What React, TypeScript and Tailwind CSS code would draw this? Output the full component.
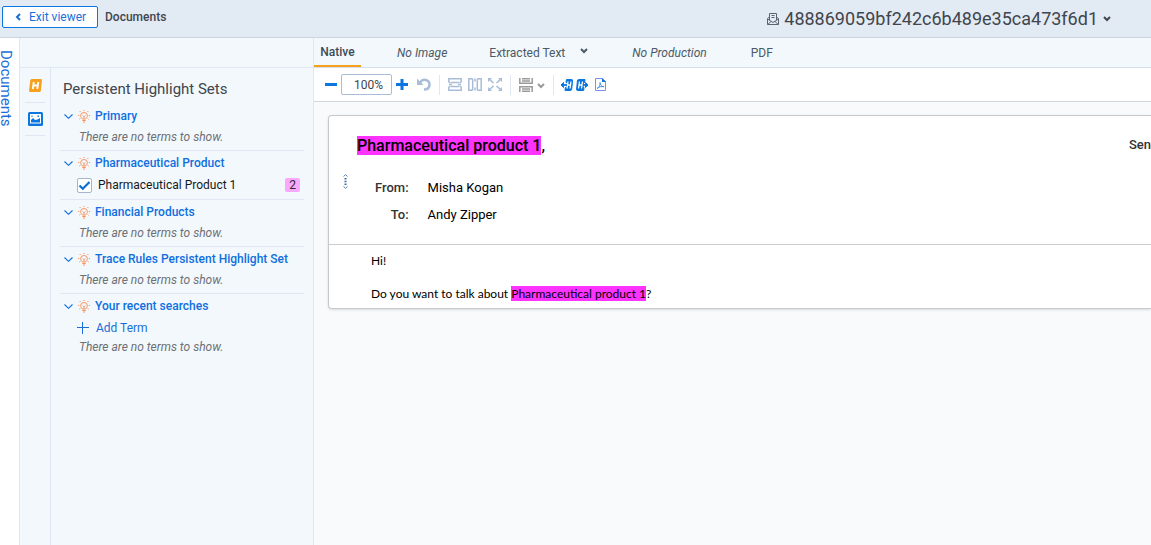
import { useState } from 'react';

const Chevron = ({ className }: { className?: string }) => (
  <svg width="9" height="5" viewBox="0 0 9 5" className={className} fill="none" stroke="currentColor" strokeWidth="1.1">
    <path d="M.5 .5 4.5 4.3 8.5 .5" />
  </svg>
);

const Caret = ({ className }: { className?: string }) => (
  <svg width="8" height="6" viewBox="0 0 8 6" className={className} fill="none" stroke="currentColor" strokeWidth="2">
    <path d="M1 1 4 4 7 1" />
  </svg>
);

const Bulb = () => (
  <svg width="12" height="13" viewBox="0 0 12 13" fill="none" stroke="#f8955f" strokeWidth="1">
    <path d="M6 2.500a3.300 3.300 0 0 0-3.400 3.300c0 1.400 1.200 2.200 1.700 3.200h3.400c.5-1 1.700-1.800 1.700-3.200A3.300 3.300 0 0 0 6 2.500Z" />
    <path d="M4.300 10.500h3.400M5 12h2M6 9V6.800M4.700 5.500 6 6.800l1.300-1.300M6 0v1M1.600 1l1 1M10.400 1l-1 1M0 5.500h1.200M10.800 5.500H12M1.400 9.200l.9-.7M10.600 9.200l-.9-.7" />
  </svg>
);

const Plus = () => (
  <svg width="12" height="12" viewBox="0 0 12 12" stroke="currentColor" strokeWidth="1">
    <path d="M0 5.500h12M5.500 0v12" />
  </svg>
);

const MailIcon = () => (
  <svg width="12" height="14" viewBox="0 0 12 14" fill="none" stroke="#5c6470" strokeWidth="1">
    <path d="M2.500 8V1.500h7V8M4.500 3.500h3M4.500 5.500h3M2.500 5 .5 6.500v6h11v-6L9.500 5M.5 7 6 10.500 11.500 7M.7 12.500 4 9.500M11.300 12.500 8 9.500" />
  </svg>
);

const PreviousHit = () => (
  <svg width="13" height="12" viewBox="0 0 13 12" fill="none" stroke="#0b76e0">
    <path d="M6.500 .5h5q1.300 0 1.100 1.300L11.700 10q-.2 1.500-1.500 1.500H5L5.300 8.500H7L7.500 3.500H6z" fill="#0b76e0" />
    <path d="M8 2.500 7 9.500M11 2.500 10 9.500M7.500 6h3" stroke="#fff" strokeWidth="1.300" />
    <path d="M7 6H2" strokeWidth="1.800" />
    <path d="M3.500 3.500 1 6l2.500 2.500z" fill="#0b76e0" />
  </svg>
);

const NextHit = () => (
  <svg width="13" height="12" viewBox="0 0 13 12" fill="none" stroke="#0b76e0">
    <path d="M2.700 .5H9L8.700 3.500H7.500L7 8.500h1l-.3 3H1.500Q.4 11.500 .6 10L1.400 2Q1.500 .5 2.700 .5z" fill="#0b76e0" />
    <path d="M3.500 2.500 2.500 9.500M6.500 2.500 5.500 9.500M3 6h3" stroke="#fff" strokeWidth="1.300" />
    <path d="M7 6h4" strokeWidth="1.800" />
    <path d="M9.500 3.500 12 6 9.500 8.500z" fill="#0b76e0" />
  </svg>
);

type Group = { name: string; empty: boolean; term?: string; count?: number; add?: boolean };

const groups: Group[] = [
  { name: 'Primary', empty: true },
  { name: 'Pharmaceutical Product', empty: false, term: 'Pharmaceutical Product 1', count: 2 },
  { name: 'Financial Products', empty: true },
  { name: 'Trace Rules Persistent Highlight Set', empty: true },
  { name: 'Your recent searches', empty: true, add: true },
];

function HighlightGroup({ group }: { group: Group }) {
  const [checked, setChecked] = useState(true);
  return (
    <section className="border-b border-[#dfe7f2] py-1 last:border-b-0">
      <button className="flex h-4 items-center pl-1 text-xs font-medium text-[#0f6fe0]">
        <Chevron className="mr-[5px]" />
        <Bulb />
        <span className="ml-[5px] whitespace-nowrap">{group.name}</span>
      </button>
      {group.term && (
        <div className="flex h-6 items-center pt-1 pr-1 pl-[17px]">
          <label className="flex flex-1 items-center gap-1.5 text-xs text-[#16181c]">
            <span className="relative flex size-[15px]">
              <input
                type="checkbox"
                checked={checked}
                onChange={(e) => setChecked(e.target.checked)}
                className="peer size-[15px] appearance-none rounded-xs border border-[#a3b5d0] bg-white"
              />
              <svg viewBox="0 0 15 15" className="pointer-events-none absolute inset-0 hidden size-[15px] peer-checked:block" fill="none" stroke="#0b6fcf" strokeWidth="2.200">
                <path d="M2.500 7.500 5.800 10.800 12.500 4" />
              </svg>
            </span>
            {group.term}
          </label>
          <span className="rounded-xs bg-[#f9a8fb] px-1 text-xs leading-[14px] text-[#2b2b33]">{group.count}</span>
        </div>
      )}
      {group.add && (
        <button className="mt-1 flex h-5 items-center gap-[7px] pl-[17px] text-xs text-[#1a6fd8]">
          <Plus />
          Add Term
        </button>
      )}
      {group.empty && (
        <p className={group.add ? 'pl-[19px] text-xs leading-[18px] text-[#6d7076] italic' : 'mt-1 pl-[19px] text-xs leading-[18px] text-[#6d7076] italic'}>
          There are no terms to show.
        </p>
      )}
    </section>
  );
}

export default function App() {
  const [zoom, setZoom] = useState('100%');
  return (
    <div className="flex min-h-screen flex-col overflow-hidden bg-[#f2f8fb] font-['Roboto',sans-serif] text-[#41454d]">
      <header className="flex h-[38px] items-center border-b border-[#cdd4de] bg-[#e2eaf4] pl-0.5">
        <button className="mb-1 flex h-[22px] w-24 items-center rounded-xs border border-[#0b76e0] bg-white pl-3 text-xs text-[#1a6fd8]">
          <svg width="6" height="8" viewBox="0 0 6 8" fill="none" stroke="currentColor" strokeWidth="2" className="mr-2">
            <path d="M5 1 2 4l3 3" />
          </svg>
          Exit viewer
        </button>
        <h1 className="mb-1 ml-[7px] text-xs font-medium">Documents</h1>
        <button className="mr-10 ml-auto flex items-center text-lg">
          <MailIcon />
          <span className="ml-[5px]">488869059bf242c6b489e35ca473f6d1</span>
          <Caret className="ml-[5px]" />
        </button>
      </header>

      <div className="flex flex-1">
        <nav className="flex w-5 shrink-0 border-r border-[#dfe7f2] bg-white">
          <a href="#documents" className="pt-3 text-[15px] leading-3 text-[#1a6fd8] [writing-mode:vertical-rl]">Documents</a>
        </nav>

        <aside className="flex w-[294px] shrink-0 flex-col border-r border-[#dfe7f2]">
          <div className="h-[30px] border-b border-[#dfe7f2]" />
          <div className="flex flex-1">
            <div className="flex w-[31px] shrink-0 flex-col items-center border-r border-[#dfe7f2]">
              <button aria-label="Highlights" className="flex h-[35px] w-5 items-center justify-center border-b border-[#dfe7f2]">
                <svg width="13" height="13" viewBox="0 0 13 13">
                  <path d="M2.800 0H11.800q1.200 0 1.100 1.200L11.900 11.500Q11.700 13 10.300 13H1.200Q0 13 .1 11.800L1.200 1.500Q1.400 0 2.800 0Z" fill="#f6a01e" />
                  <path d="M4.800 3 3.800 10M9.300 3 8.300 10M4.500 6.500H8.500" stroke="#fff" strokeWidth="1.900" />
                </svg>
              </button>
              <button aria-label="Images" className="flex h-[33px] w-5 items-center justify-center border-b border-[#dfe7f2]">
                <svg width="15" height="14" viewBox="0 0 15 14">
                  <rect width="15" height="14" rx="1.500" fill="#0b76e0" />
                  <path d="M2 2h11v9.500H2z" fill="#fff" />
                  <path d="M3 10.500V8l2-2 2 2 2.500-.5L12 6v4.500zM9.500 3.500h1.500V5H9.500zM3.500 3.500h1V5h-1z" fill="#0b76e0" />
                </svg>
              </button>
            </div>
            <div className="min-w-0 flex-1 px-[9px] pt-2.5">
              <h2 className="mb-1 pl-[3px] text-[15px] leading-[22px]">Persistent Highlight Sets</h2>
              {groups.map((g) => (
                <HighlightGroup key={g.name} group={g} />
              ))}
            </div>
          </div>
        </aside>

        <main className="flex min-w-0 flex-1 flex-col bg-[#f9fafc]">
          <div className="flex h-[30px] items-stretch border-b border-[#d5dfea] bg-[#f2f8fb] text-xs text-[#4b5a68]">
            <button className="w-[47px] border-b-2 border-[#f6a01e] font-medium text-[#3d4a58]">Native</button>
            <button className="ml-9 italic">No Image</button>
            <button className="ml-[42px] flex items-center">
              Extracted Text
              <Caret className="mb-1 ml-[15px]" />
            </button>
            <button className="ml-11 italic">No Production</button>
            <button className="ml-11">PDF</button>
          </div>

          <div className="flex h-[34px] items-center border-b border-[#d3d6da] bg-white pl-[11px] text-[#0b76e0]">
            <button aria-label="Zoom out">
              <svg width="12" height="12" viewBox="0 0 12 12"><path d="M0 4h12v3H0z" fill="currentColor" /></svg>
            </button>
            <input
              aria-label="Zoom level"
              value={zoom}
              onChange={(e) => setZoom(e.target.value)}
              className="mx-1 h-[21px] w-[51px] rounded-xs border border-[#a9bcd8] bg-white pr-2 text-right text-xs text-[#41454d]"
            />
            <button aria-label="Zoom in">
              <svg width="12" height="12" viewBox="0 0 12 12"><path d="M0 4h12v3H0zM4.500 0h3v11h-3z" fill="currentColor" /></svg>
            </button>
            <button aria-label="Rotate" className="ml-[9px] text-[#a9bcd8]">
              <svg width="14" height="13" viewBox="0 0 14 13" fill="none" stroke="currentColor" strokeWidth="2.600">
                <path d="M3 5C5.500-.2 12.500 1.500 12.500 6.500c0 3-2 5-5.500 5" />
                <path d="M0 .5V7h6.500z" fill="currentColor" stroke="none" />
              </svg>
            </button>
            <span className="mx-2 h-5 w-px bg-[#dfe7f2]" />
            <span className="flex gap-1.5 text-[#a9bcd8]">
              <button aria-label="Fit width">
                <svg width="14" height="13" viewBox="0 0 14 13" fill="none" stroke="currentColor" strokeWidth="1.500">
                  <path d="M2.500 4.800.8 3.800v-3h12.400v3l-1.700 1M2.500 8.200.8 9.200v3h12.400v-3l-1.700-1M3 4.500h8M3 8.500h8M1 6.500h3M10 6.500h3" />
                </svg>
              </button>
              <button aria-label="Fit height">
                <svg width="14" height="13" viewBox="0 0 14 13" fill="none" stroke="currentColor" strokeWidth="1.500">
                  <path d="M5 2.500 4 .8H.8v11.400H4l1-1.700M9 2.500 10 .8h3.200v11.400H10l-1-1.700M4.700 2.500v8M9.300 2.500v8M7 .5v3M7 9.500v3" />
                </svg>
              </button>
              <button aria-label="Fit page">
                <svg width="14" height="13" viewBox="0 0 14 13" fill="none" stroke="currentColor" strokeWidth="1.600">
                  <path d="m1 1 4.500 4M13 1 8.500 5M1 12l4.500-4M13 12 8.500 8" />
                  <path d="M0 0h4L0 4zM14 0h-4l4 4zM0 13h4L0 9zM14 13h-4l4-4z" fill="currentColor" stroke="none" />
                </svg>
              </button>
            </span>
            <span className="mx-2 h-5 w-px bg-[#dfe7f2]" />
            <button aria-label="Page layout" className="flex items-center gap-1 text-[#9a9a9a]">
              <svg width="14" height="14" viewBox="0 0 14 14" fill="none" stroke="currentColor" strokeWidth="1.500">
                <path d="M.8 0v5.200h12.400V0M.8 14V8.800h12.400V14M3 .8h8M3 3h8M3 11h8M3 13.200h8" />
              </svg>
              <Caret className="mt-0.5" />
            </button>
            <span className="mr-1.5 ml-2 h-5 w-px bg-[#dfe7f2]" />
            <span className="flex items-center gap-[3px]">
              <button aria-label="Previous highlight"><PreviousHit /></button>
              <button aria-label="Next highlight"><NextHit /></button>
              <button aria-label="Save as PDF" className="ml-[3px]">
                <svg width="11" height="13" viewBox="0 0 11 13" fill="none">
                  <path d="M.5 .5H7.500L10.500 3.500v9H.5z" stroke="#7c8fee" />
                  <path d="M7 0v4h4z" fill="#0b76e0" />
                  <path d="M2 10.500C4 9.500 5.500 7 5 4.500 5.500 7.500 7 9 9 8.700 6.500 8 4 9 2 10.500Z" stroke="#2f7fe0" strokeWidth=".8" />
                </svg>
              </button>
            </span>
          </div>

          <article className="mt-[13px] ml-3.5 rounded-l border border-r-0 border-[#c6c9cd] bg-white text-black shadow-sm">
            <div className="border-b border-[#cccccc] pb-4">
              <div className="flex items-start justify-between pt-5 pl-7">
                <h3 className="text-base leading-5 font-medium">
                  <mark className="bg-[#ff33ff]">Pharmaceutical product 1</mark>,
                </h3>
                <span className="text-[13px] leading-[18px] font-medium text-[#333]">Sen</span>
              </div>
              <div className="flex pt-[18px] pl-3.5">
                <svg width="5" height="15" viewBox="0 0 5 15" fill="none" stroke="#5b7fb8">
                  <path d="M.5 2.500 2.500 .7l2 1.800M.5 12.500l2 1.800 2-1.800" />
                  <path d="M1.500 4h2v1.500h-2zM1.500 6.700h2v1.500h-2zM1.500 9.500h2V11h-2z" fill="#3f68ad" stroke="none" />
                </svg>
                <dl className="ml-[27px] grid grid-cols-[auto_1fr] gap-x-[19px] text-[13px] leading-[27px]">
                  <dt className="text-right font-medium text-[#333]">From:</dt>
                  <dd>Misha Kogan</dd>
                  <dt className="text-right font-medium text-[#333]">To:</dt>
                  <dd>Andy Zipper</dd>
                </dl>
              </div>
            </div>
            <div className="pt-[7px] pb-1.5 pl-[42px] font-['Lato',sans-serif] text-xs leading-[17px]">
              <p>Hi!</p>
              <p className="mt-4">
                Do you want to talk about <mark className="bg-[#ff33ff]">Pharmaceutical product 1</mark>?
              </p>
            </div>
          </article>
        </main>
      </div>
    </div>
  );
}
